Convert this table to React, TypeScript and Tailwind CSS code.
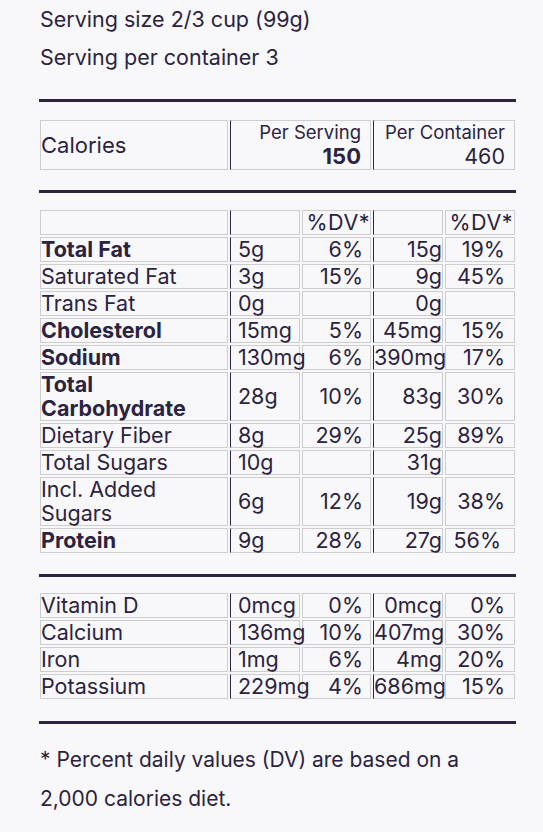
import React from 'react';

type Row = {
  label: string[];
  bold?: boolean;
  serving: string;
  servingDv: string;
  container: string;
  containerDv: string;
  dvPad?: string;
};

const nutrients: Row[] = [
  { label: ['Total Fat'], bold: true, serving: '5g', servingDv: '6%', container: '15g', containerDv: '19%' },
  { label: ['Saturated Fat'], serving: '3g', servingDv: '15%', container: '9g', containerDv: '45%' },
  { label: ['Trans Fat'], serving: '0g', servingDv: '', container: '0g', containerDv: '' },
  { label: ['Cholesterol'], bold: true, serving: '15mg', servingDv: '5%', container: '45mg', containerDv: '15%' },
  { label: ['Sodium'], bold: true, serving: '130mg', servingDv: '6%', container: '390mg', containerDv: '17%' },
  { label: ['Total', 'Carbohydrate'], bold: true, serving: '28g', servingDv: '10%', container: '83g', containerDv: '30%' },
  { label: ['Dietary Fiber'], serving: '8g', servingDv: '29%', container: '25g', containerDv: '89%' },
  { label: ['Total Sugars'], serving: '10g', servingDv: '', container: '31g', containerDv: '' },
  { label: ['Incl. Added', 'Sugars'], serving: '6g', servingDv: '12%', container: '19g', containerDv: '38%' },
  { label: ['Protein'], bold: true, serving: '9g', servingDv: '28%', container: '27g', containerDv: '56%', dvPad: 'pr-[13px]' },
];

const vitamins: Row[] = [
  { label: ['Vitamin D'], serving: '0mcg', servingDv: '0%', container: '0mcg', containerDv: '0%' },
  { label: ['Calcium'], serving: '136mg', servingDv: '10%', container: '407mg', containerDv: '30%' },
  { label: ['Iron'], serving: '1mg', servingDv: '6%', container: '4mg', containerDv: '20%' },
  { label: ['Potassium'], serving: '229mg', servingDv: '4%', container: '686mg', containerDv: '15%' },
];

const cell = 'border border-[#cdcdcd] p-0 whitespace-nowrap';
const dark = 'border-l-[#2b2340]';

const Rule = () => <div className="ml-px h-[3px] w-[477px] bg-[#2b2340]" />;

const Cols = () => (
  <colgroup>
    <col className="w-[188px]" />
    <col className="w-[70px]" />
    <col className="w-[69px]" />
    <col className="w-[70px]" />
    <col className="w-[70px]" />
  </colgroup>
);

const NutrientTable: React.FC<{ rows: Row[]; header?: boolean; className?: string }> = ({ rows, header, className }) => (
  <table className={`w-[479px] table-fixed border-separate border-spacing-[2px] text-[21.5px] leading-[23px] ${className}`}>
    <Cols />
    <tbody>
      {header && (
        <tr>
          <td className={cell}></td>
          <td className={`${cell} ${dark}`}></td>
          <td className={`${cell} text-right tracking-[0.5px]`}>%DV*</td>
          <td className={`${cell} ${dark}`}></td>
          <td className={`${cell} pr-[1px] text-right tracking-[0.5px]`}>%DV*</td>
        </tr>
      )}
      {rows.map((r) => (
        <tr key={r.label.join(' ')}>
          <td className={`${cell} ${r.bold ? 'font-bold' : ''} ${r.label.length > 1 ? 'leading-[23.5px]' : ''}`}>
            {r.label.map((l, i) => (
              <React.Fragment key={l}>
                {i > 0 && <br />}
                {l}
              </React.Fragment>
            ))}
          </td>
          <td className={`${cell} ${dark} pl-[7px]`}>{r.serving}</td>
          <td className={`${cell} pr-[7px] text-right`}>{r.servingDv}</td>
          <td className={`${cell} ${dark} text-right`}>{r.container}</td>
          <td className={`${cell} ${r.dvPad ?? 'pr-[9px]'} text-right`}>{r.containerDv}</td>
        </tr>
      ))}
    </tbody>
  </table>
);

export default function App() {
  return (
    <div className="min-h-screen bg-[#f8f8fb] font-['Inter','Noto_Sans',sans-serif] text-[#2b2340]">
      <div className="ml-[38px] w-[479px]">
        <div className="pl-[2px] text-[21.5px] leading-[38px]">
          <p>Serving size 2/3 cup (99g)</p>
          <p>Serving per container 3</p>
        </div>

        <div className="mt-[23px]">
          <Rule />
        </div>

        <table className="mt-[16px] w-[479px] table-fixed border-separate border-spacing-[2px]">
          <colgroup>
            <col className="w-[188px]" />
            <col className="w-[141px]" />
            <col className="w-[142px]" />
          </colgroup>
          <tbody>
            <tr>
              <td className={`${cell} text-[22px]`}>Calories</td>
              <td className={`${cell} ${dark} pr-[9px] text-right text-[18.5px] leading-[23.5px]`}>
                Per Serving
                <br />
                <span className="text-[22px] font-bold">150</span>
              </td>
              <td className={`${cell} ${dark} pr-[9px] text-right text-[18.5px] leading-[23.5px]`}>
                Per Container
                <br />
                <span className="text-[21.5px]">460</span>
              </td>
            </tr>
          </tbody>
        </table>

        <div className="mt-[18px]">
          <Rule />
        </div>

        <NutrientTable rows={nutrients} header className="mt-[15px]" />

        <div className="mt-[19px]">
          <Rule />
        </div>

        <NutrientTable rows={vitamins} className="mt-[14px]" />

        <div className="mt-[20px]">
          <Rule />
        </div>

        <div className="mt-[16px] pl-[2px] text-[21px] leading-[39px]">
          <p>* Percent daily values (DV) are based on a</p>
          <p>2,000 calories diet.</p>
        </div>
      </div>
    </div>
  );
}
